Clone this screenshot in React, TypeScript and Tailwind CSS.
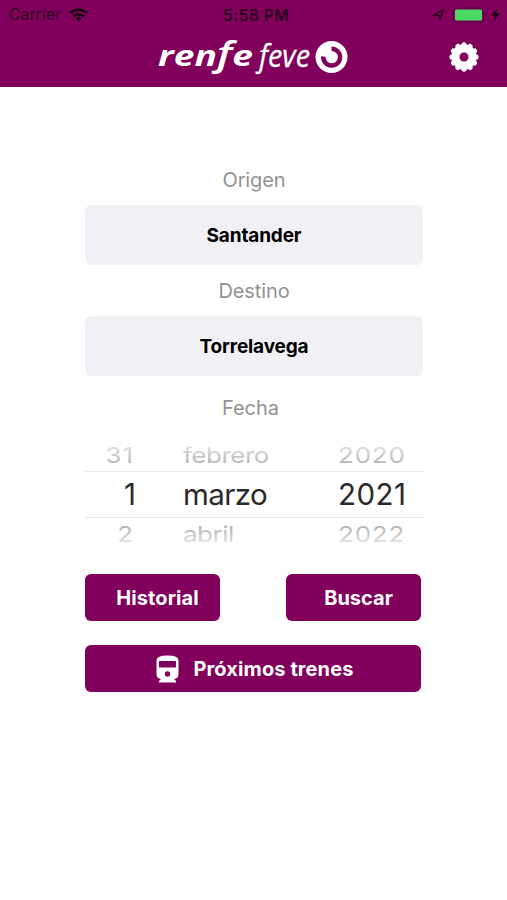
import React from 'react';

const PICKER_COLUMNS = [
  { id: 'day', values: ['31', '1', '2'], className: 'w-[51px] items-end', side: 'pr-[2px] tracking-[0.9px]', selected: '' },
  { id: 'month', values: ['febrero', 'marzo', 'abril'], className: 'ml-[46px] w-[155px] items-start', side: 'pl-[1px] tracking-[-0.5px]', selected: 'pl-[1px] tracking-[-0.6px]' },
  { id: 'year', values: ['2020', '2021', '2022'], className: 'w-[86px] items-start', side: 'pl-[1px] tracking-[0.8px]', selected: 'pl-[1px] tracking-[0.5px]' },
];

const TEETH = Array.from({ length: 12 }, (_, i) => i * 30);

const StatusBar: React.FC = () => (
  <div className="flex h-[30px] items-center px-[9px] text-[#2b0020]">
    <div className="flex w-[180px] items-center gap-[8px]">
      <span className="text-[15.5px] tracking-[0.2px]">Carrier</span>
      <svg className="h-[14px] w-[19px]" viewBox="0 0 19 14" fill="none" stroke="#14000e" strokeWidth="2.5">
        <path d="M1 5.2a12.2 12.2 0 0 1 17 0" />
        <path d="M4 8.4a7.9 7.9 0 0 1 11 0" />
        <path d="M9.5 13.3 6.6 10.4a4.2 4.2 0 0 1 5.8 0Z" fill="#14000e" stroke="none" />
      </svg>
    </div>
    <div className="flex-1 pt-[1px] pl-[1px] text-[15.5px] font-semibold tracking-[0.5px] whitespace-nowrap">
      <span className="ml-[33px]">5:58 PM</span>
    </div>
    <svg className="-mr-[7px] h-[20px] w-[75px]" viewBox="0 0 75 20" fill="none">
      <path d="M3.5 9.9 13.5 5 10 14.5 8.6 10.2Z" stroke="#2b0020" strokeWidth="1.6" strokeLinejoin="round" />
      <rect x="23" y="3" width="31" height="14" rx="4" stroke="#5c0044" strokeWidth="1.2" />
      <rect x="25" y="4.5" width="27" height="11" rx="1.5" fill="#4cd964" />
      <path d="M56 7.5q2.5 2.5 0 5Z" fill="#5c0044" />
      <path d="M67.5 3.5 61.5 10.5h3.5l-1.5 5.5 6.5-7.5h-3.7Z" fill="#14000e" />
    </svg>
  </div>
);

const Logo: React.FC = () => (
  <svg className="h-[44px] w-[200px] overflow-visible" viewBox="0 0 200 44" fill="#fff">
    <g fontFamily="'Open Sans', sans-serif" fontStyle="italic">
      <text x="5" y="30.5" fontSize="29" fontWeight="700" textLength="95" lengthAdjust="spacingAndGlyphs">
        ren<tspan fontSize="35" fontWeight="600">f</tspan>e
      </text>
      <text x="106" y="31.5" fontSize="31" fontWeight="400" textLength="51" lengthAdjust="spacingAndGlyphs" stroke="#fff" strokeWidth="0.3">feve</text>
    </g>
    <circle cx="178.5" cy="22" r="16" />
    <path d="M170.300 21.500a8.400 8.400 0 1 0 8.200-7.700" fill="none" stroke="#80005c" strokeWidth="4.500" />
  </svg>
);

const Gear: React.FC = () => (
  <svg className="h-[30px] w-[30px]" viewBox="-15 -15 30 30">
    <circle r="12.7" fill="#fff" />
    {TEETH.map((angle) => (
      <circle key={angle} cx="12.2" r="2.5" fill="#fff" transform={`rotate(${angle})`} />
    ))}
    <circle r="4.5" fill="#80005c" />
  </svg>
);

const TrainIcon: React.FC = () => (
  <svg className="h-[28px] w-[23px]" viewBox="0 0 23 28">
    <path d="M3 27.5v-1.5l2-2Q.5 23.5.5 19V5.5Q.5.5 11.5.5T22.5 5.5V19q0 4.5-4.5 5l2 2v1.5Z" fill="#fff" />
    <path d="M3 6h17v6.5H3Z" fill="#80005c" />
    <circle cx="11.5" cy="19" r="2.7" fill="#80005c" />
  </svg>
);

interface StationFieldProps {
  label: string;
  value: string;
}

const StationField: React.FC<StationFieldProps> = ({ label, value }) => (
  <div>
    <div className="flex h-[51px] items-center justify-center text-[20px] tracking-[-0.1px] text-[#929292]">{label}</div>
    <button className="flex h-[60px] w-full items-center justify-center rounded-[6px] bg-[#f1f0f5] pt-[2px] text-[19px] font-bold tracking-[-0.15px] text-black">
      {value}
    </button>
  </div>
);

const DatePicker: React.FC = () => (
  <div className="relative flex h-[109px] w-full">
    {PICKER_COLUMNS.map(({ id, values, className, side, selected }) => (
      <div key={id} className={`flex flex-col ${className}`}>
        <div className={`flex h-[27px] scale-y-[0.85] items-center text-[26px] text-[#a8a8a8] ${side}`}>{values[0]}</div>
        <div className={`flex h-[52px] items-center text-[29.5px] text-[#2a2a2a] ${selected}`}>{values[1]}</div>
        <div className={`flex h-[28px] scale-y-[0.85] items-center text-[26px] text-[#a8a8a8] ${side}`}>{values[2]}</div>
      </div>
    ))}
    <div className="pointer-events-none absolute inset-x-0 top-[30px] h-[47px] border-y border-[#e6e6e6]" />
    <div className="pointer-events-none absolute inset-x-0 top-0 h-[28px] bg-linear-to-b from-white/80 to-white/0" />
    <div className="pointer-events-none absolute inset-x-0 bottom-0 h-[28px] bg-linear-to-t from-white/90 to-white/0" />
  </div>
);

export default function App() {
  return (
    <div className="min-h-[900px] w-full bg-white font-['Inter',sans-serif]">
      <header className="h-[87px] bg-[#80005c]">
        <StatusBar />
        <div className="flex items-center pt-[5px] pl-[153px]">
          <Logo />
          <button className="ml-[96px]"><Gear /></button>
        </div>
      </header>

      <main className="ml-[85px] w-[338px] pt-[67px]">
        <StationField label="Origen" value="Santander" />
        <StationField label="Destino" value="Torrelavega" />

        <div className="flex h-[65px] items-center justify-center pr-[7px] pb-[2px] text-[20px] text-[#929292]">Fecha</div>
        <DatePicker />

        {/* Actions */}
        <div className="mt-[24px] mr-[2px] text-[20px] font-bold text-white">
          <div className="flex justify-between">
            <button className="h-[47px] w-[135px] rounded-[6px] bg-[#80005c] pl-[10px] tracking-[0.1px]">Historial</button>
            <button className="h-[47px] w-[135px] rounded-[6px] bg-[#80005c] pl-[10px]">Buscar</button>
          </div>
          <button className="mt-[24px] flex h-[47px] w-full items-center justify-center gap-[15px] rounded-[6px] bg-[#80005c] pl-[3px] tracking-[0.1px]">
            <TrainIcon />
            Próximos trenes
          </button>
        </div>
      </main>
    </div>
  );
}
